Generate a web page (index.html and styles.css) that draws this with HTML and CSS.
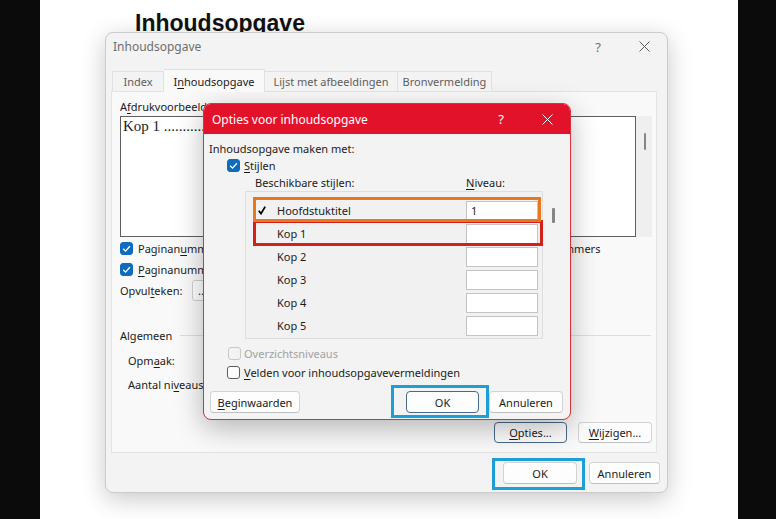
FILE: index.html
```html
<!DOCTYPE html>
<html lang="nl">
<head>
    <meta charset="UTF-8">
    <meta name="viewport" content="width=device-width, initial-scale=1.0">
    <title>Inhoudsopgave</title>
    <link rel="stylesheet" href="styles.css">
</head>
<body>
    <div class="page">
        <h1 class="doc-title">Inhoudsopgave</h1>
    </div>

    <!-- main dialog -->
    <div class="dialog toc-dialog">
        <div class="titlebar">
            <span class="title">Inhoudsopgave</span>
            <span class="tb-btn">?</span>
            <span class="tb-btn">
                <svg width="11" height="11" viewBox="0 0 11 11"><path d="M0.5 0.5l10 10M10.5 0.5l-10 10" stroke="#5c5c5c" stroke-width="1"/></svg>
            </span>
        </div>
        <div class="tabs">
            <div class="tab tab-index">Index</div>
            <div class="tab tab-toc active"><span>I<u>n</u>houdsopgave</span></div>
            <div class="tab tab-figures">Lijst met afbeeldingen</div>
            <div class="tab tab-sources">Bronvermelding</div>
        </div>
        <div class="panel">
            <div class="preview-cols">
                <div class="preview-col col-print">
                    <div class="field-label"><span>A<u>f</u>drukvoorbeeld</span></div>
                    <div class="preview">
                        <div class="preview-page serif">Kop 1 ........................................ 1</div>
                        <div class="vscroll"><span class="thumb"></span></div>
                    </div>
                    <div class="check-row">
                        <span class="cb on"><svg width="13" height="13" viewBox="0 0 13 13"><path d="M3.2 6.8l2.3 2.3 4.4-4.9" fill="none" stroke="#fff" stroke-width="1.3"/></svg></span>
                        <span>Paginan<u>u</u>mmers weergeven</span>
                    </div>
                    <div class="check-row">
                        <span class="cb on"><svg width="13" height="13" viewBox="0 0 13 13"><path d="M3.2 6.8l2.3 2.3 4.4-4.9" fill="none" stroke="#fff" stroke-width="1.3"/></svg></span>
                        <span><u>P</u>aginanummers rechts uitlijnen</span>
                    </div>
                    <div class="form-row">
                        <span class="form-label">Opvul<u>t</u>eken:</span>
                        <span class="select">.......</span>
                    </div>
                </div>
                <div class="preview-col col-web">
                    <div class="field-label"></div>
                    <div class="preview">
                        <div class="preview-page"></div>
                        <div class="vscroll"><span class="thumb"></span></div>
                    </div>
                    <div class="check-row">
                        <span class="cb on"><svg width="13" height="13" viewBox="0 0 13 13"><path d="M3.2 6.8l2.3 2.3 4.4-4.9" fill="none" stroke="#fff" stroke-width="1.3"/></svg></span>
                        <span>Hyperlinks in plaats van paginanummers</span>
                    </div>
                </div>
            </div>

            <div class="group">
                <div class="group-head"><span>Algemeen</span><span class="group-line"></span></div>
                <div class="group-row"><span class="form-label wide">Opm<u>a</u>ak:</span><span class="select long">Van sjabloon</span></div>
                <div class="group-row"><span class="form-label wide">Aantal ni<u>v</u>eaus:</span><span class="select short">3</span></div>
            </div>

            <div class="panel-buttons">
                <button class="btn focus btn-options"><u>O</u>pties...</button>
                <button class="btn btn-edit"><u>W</u>ijzigen...</button>
            </div>
        </div>
        <div class="footer">
            <button class="btn btn-ok">OK</button>
            <button class="btn btn-cancel">Annuleren</button>
        </div>
    </div>

    <!-- options dialog on top -->
    <div class="dialog options-dialog">
        <div class="titlebar red">
            <span class="title">Opties voor inhoudsopgave</span>
            <span class="tb-btn">?</span>
            <span class="tb-btn">
                <svg width="11" height="11" viewBox="0 0 11 11"><path d="M0.5 0.5l10 10M10.5 0.5l-10 10" stroke="#fff" stroke-width="1"/></svg>
            </span>
        </div>
        <div class="options-body">
            <div class="opt-line">Inhoudsopgave maken met:</div>
            <div class="opt-check styles-check">
                <span class="cb on"><svg width="13" height="13" viewBox="0 0 13 13"><path d="M3.2 6.8l2.3 2.3 4.4-4.9" fill="none" stroke="#fff" stroke-width="1.3"/></svg></span>
                <span><u>S</u>tijlen</span>
            </div>
            <div class="list-labels">
                <span>Beschikbare stijlen:</span>
                <span><u>N</u>iveau:</span>
            </div>
            <div class="list-wrap">
                <div class="style-list">
                    <div class="style-row">
                        <span class="tick"><svg width="8" height="9" viewBox="0 0 8 9"><path d="M0.8 4.8l2.2 2.8 4.2-7" fill="none" stroke="#000" stroke-width="1.8"/></svg></span>
                        <span class="style-name">Hoofdstuktitel</span>
                        <span class="level">1</span>
                    </div>
                    <div class="style-row">
                        <span class="tick"></span>
                        <span class="style-name">Kop 1</span>
                        <span class="level"></span>
                    </div>
                    <div class="style-row">
                        <span class="tick"></span>
                        <span class="style-name">Kop 2</span>
                        <span class="level"></span>
                    </div>
                    <div class="style-row">
                        <span class="tick"></span>
                        <span class="style-name">Kop 3</span>
                        <span class="level"></span>
                    </div>
                    <div class="style-row">
                        <span class="tick"></span>
                        <span class="style-name">Kop 4</span>
                        <span class="level"></span>
                    </div>
                    <div class="style-row">
                        <span class="tick"></span>
                        <span class="style-name">Kop 5</span>
                        <span class="level"></span>
                    </div>
                </div>
                <div class="list-scroll"><span class="thumb"></span></div>
            </div>
            <div class="opt-check disabled">
                <span class="cb off"></span>
                <span>Overzichtsniveaus</span>
            </div>
            <div class="opt-check">
                <span class="cb"></span>
                <span><u>V</u>elden voor inhoudsopgavevermeldingen</span>
            </div>
            <div class="opt-buttons">
                <button class="btn btn-reset"><u>B</u>eginwaarden</button>
                <span class="spacer"></span>
                <button class="btn focus btn-opt-ok">OK</button>
                <button class="btn btn-opt-cancel">Annuleren</button>
            </div>
        </div>
    </div>

    <!-- annotation boxes -->
    <div class="mark mark-red"></div>
    <div class="mark mark-orange"></div>
    <div class="mark mark-blue mark-inner-ok"></div>
    <div class="mark mark-blue mark-outer-ok"></div>
</body>
</html>
```

FILE: styles.css
```css
* {
    box-sizing: border-box;
}

html, body {
    margin: 0;
    padding: 0;
}

body {
    width: 776px;
    height: 519px;
    overflow: hidden;
    position: relative;
    background: #0b0b0b;
    font-family: "Noto Sans", "Open Sans", sans-serif;
    font-size: 11px;
    color: #1b1b1b;
}

u {
    text-underline-offset: 2px;
}

.page {
    margin-left: 40px;
    width: 698px;
    height: 519px;
    background: #fff;
    padding: 9px 0 0 95px;
}

.doc-title {
    margin: 0;
    font-family: "Liberation Sans", Arial, sans-serif;
    font-weight: bold;
    font-size: 23px;
    line-height: 28px;
    color: #111;
}

/* dialogs */
.dialog {
    position: absolute;
}

.titlebar {
    display: flex;
    align-items: center;
}

.titlebar .title {
    flex: 1;
}

.tb-btn {
    width: 46px;
    display: flex;
    justify-content: center;
    align-items: center;
    font-size: 13px;
}

.toc-dialog {
    left: 105px;
    top: 32px;
    width: 563px;
    height: 461px;
    background: #f3f3f3;
    border: 1px solid #cbcbcb;
    border-radius: 8px;
    box-shadow: 0 6px 24px rgba(0, 0, 0, 0.22);
    display: flex;
    flex-direction: column;
}

.toc-dialog .titlebar {
    height: 27px;
    color: #6e6e6e;
}

.toc-dialog .titlebar .title {
    padding-left: 7px;
    font-size: 12px;
}

.tabs {
    display: flex;
    align-items: flex-end;
    height: 22px;
    margin-top: 9px;
    padding-left: 6px;
    position: relative;
    z-index: 1;
}

.tab {
    height: 20px;
    display: flex;
    align-items: center;
    justify-content: center;
    border: 1px solid #e0e0e0;
    border-bottom: none;
    border-left: none;
    color: #5e5e5e;
    background: #f3f3f3;
}

.tab-index {
    width: 52px;
    border-left: 1px solid #e0e0e0;
}

.tab-toc {
    width: 101px;
}

.tab-figures {
    width: 133px;
}

.tab-sources {
    width: 94px;
}

.tab.active {
    height: 23px;
    margin-bottom: -1px;
    background: #f9f9f9;
    color: #1b1b1b;
}

.panel {
    height: 362px;
    margin: 0 10px 0 5px;
    background: #f9f9f9;
    border: 1px solid #e4e4e4;
    padding: 7px 4px 9px 8px;
    display: flex;
    flex-direction: column;
}

.preview-cols {
    display: flex;
    gap: 19px;
}

.col-print {
    width: 232px;
}

.col-web {
    width: 281px;
}

.field-label {
    line-height: 16px;
    height: 16px;
}

.preview {
    margin-top: 1px;
    height: 121px;
    display: flex;
}

.preview-page {
    flex: 1;
    background: #fff;
    border: 1px solid #5e5e5e;
    overflow: hidden;
    white-space: nowrap;
}

.serif {
    font-family: "Liberation Serif", "Times New Roman", serif;
    font-size: 15px;
    padding: 1px 0 0 2px;
}

.vscroll {
    width: 16px;
    background: #efefef;
    position: relative;
}

.vscroll .thumb {
    position: absolute;
    left: 8px;
    top: 17px;
    width: 2px;
    height: 17px;
    border-radius: 1px;
    background: #858585;
}

.check-row {
    display: flex;
    align-items: center;
    gap: 5px;
    height: 21px;
    white-space: nowrap;
}

.preview + .check-row {
    margin-top: 1px;
}

.cb {
    width: 13px;
    height: 13px;
    flex: none;
    border-radius: 3px;
    border: 1px solid #5f5f5f;
    background: #fdfdfd;
    display: inline-flex;
}

.cb.on {
    background: #0f6cbd;
    border-color: #0f6cbd;
}

.cb.on svg {
    margin: -1px;
}

.cb.off {
    border-color: #c8c8c8;
    background: #f3f3f3;
}

.form-row {
    display: flex;
    align-items: center;
    height: 21px;
}

.form-label {
    width: 72px;
    flex: none;
}

.form-label.wide {
    width: 91px;
}

.select {
    height: 21px;
    width: 150px;
    border: 1px solid #cfcfcf;
    border-radius: 3px;
    background: #fff;
    padding: 1px 5px;
    line-height: 17px;
}

.select.long {
    width: 170px;
}

.select.short {
    width: 50px;
}

.group {
    margin-top: 26px;
}

.group-head {
    display: flex;
    align-items: center;
    gap: 8px;
    height: 16px;
}

.group-line {
    flex: 1;
    border-top: 1px solid #dedede;
    margin-right: 1px;
}

.group-head + .group-row {
    margin-top: 5px;
}

.group-row {
    display: flex;
    align-items: center;
    height: 24px;
    padding-left: 8px;
}

.panel-buttons {
    margin-top: auto;
    display: flex;
    justify-content: flex-end;
    gap: 11px;
}

.btn {
    height: 21px;
    padding: 0;
    border: 1px solid #d3d3d3;
    border-bottom-color: #c0c0c0;
    border-radius: 4px;
    background: #fdfdfd;
    font-family: inherit;
    font-size: 11px;
    color: #1b1b1b;
}

.btn.focus {
    border-color: #47698c;
}

.btn-options {
    width: 73px;
}

.btn-edit {
    width: 74px;
}

.footer {
    flex: 1;
    display: flex;
    justify-content: flex-end;
    gap: 12px;
    padding: 9px 7px 0 0;
}

.btn-ok {
    width: 74px;
    height: 22px;
}

.btn-cancel {
    width: 71px;
    height: 22px;
}

/* options dialog */
.options-dialog {
    left: 203px;
    top: 103px;
    width: 368px;
    height: 317px;
    background: #f3f3f3;
    border: 1px solid #d2343b;
    border-radius: 8px;
    box-shadow: 0 8px 28px rgba(0, 0, 0, 0.28);
    overflow: hidden;
}

.titlebar.red {
    height: 30px;
    background: #e3122b;
    color: #fff;
}

.titlebar.red .title {
    padding-left: 8px;
    font-size: 12px;
}

.options-body {
    padding: 6px 7px 0 5px;
}

.opt-line {
    line-height: 16px;
    margin-top: 1px;
}

.opt-check {
    display: flex;
    align-items: center;
    gap: 4px;
    height: 19px;
    padding-left: 18px;
}

.styles-check {
    height: 17px;
}

.opt-check.disabled {
    color: #a2a2a2;
    padding-left: 19px;
    gap: 3px;
    margin-top: 5px;
}

.list-labels {
    display: grid;
    grid-template-columns: 221px 1fr;
    padding-left: 36px;
    line-height: 16px;
    margin-top: 1px;
}

.list-labels span:first-child {
    padding-left: 10px;
}

.list-wrap {
    display: flex;
    padding-left: 36px;
}

.style-list {
    width: 301px;
    height: 148px;
    background: #f1f1f1;
    border: 1px solid #dedede;
    padding-top: 7px;
}

.style-row {
    display: grid;
    grid-template-columns: 31px 189px 72px;
    align-items: center;
    height: 23px;
}

.tick {
    padding-left: 12px;
    display: flex;
}

.level {
    height: 20px;
    background: #fff;
    border: 1px solid #c3c3c3;
    padding-left: 4px;
    line-height: 18px;
}

.list-scroll {
    width: 20px;
    position: relative;
}

.list-scroll .thumb {
    position: absolute;
    left: 9px;
    top: 17px;
    width: 3px;
    height: 15px;
    border-radius: 1px;
    background: #858585;
}

.opt-buttons {
    display: flex;
    gap: 11px;
    margin-top: 9px;
    padding-left: 1px;
}

.opt-buttons .spacer {
    flex: 1;
}

.btn-reset {
    width: 90px;
    height: 22px;
}

.btn-opt-ok {
    width: 73px;
    height: 22px;
    margin-right: -1px;
}

.btn-opt-cancel {
    width: 74px;
    height: 22px;
}

/* annotation rectangles */
.mark {
    position: absolute;
    border: 3px solid;
}

.mark-orange {
    left: 253px;
    top: 197px;
    width: 288px;
    height: 25px;
    border-color: #e67821;
}

.mark-red {
    left: 253px;
    top: 220px;
    width: 290px;
    height: 26px;
    border-color: #d42019;
}

.mark-blue {
    border-color: #1d9fd6;
}

.mark-inner-ok {
    left: 391px;
    top: 385px;
    width: 98px;
    height: 33px;
}

.mark-outer-ok {
    left: 492px;
    top: 458px;
    width: 93px;
    height: 32px;
}
```
